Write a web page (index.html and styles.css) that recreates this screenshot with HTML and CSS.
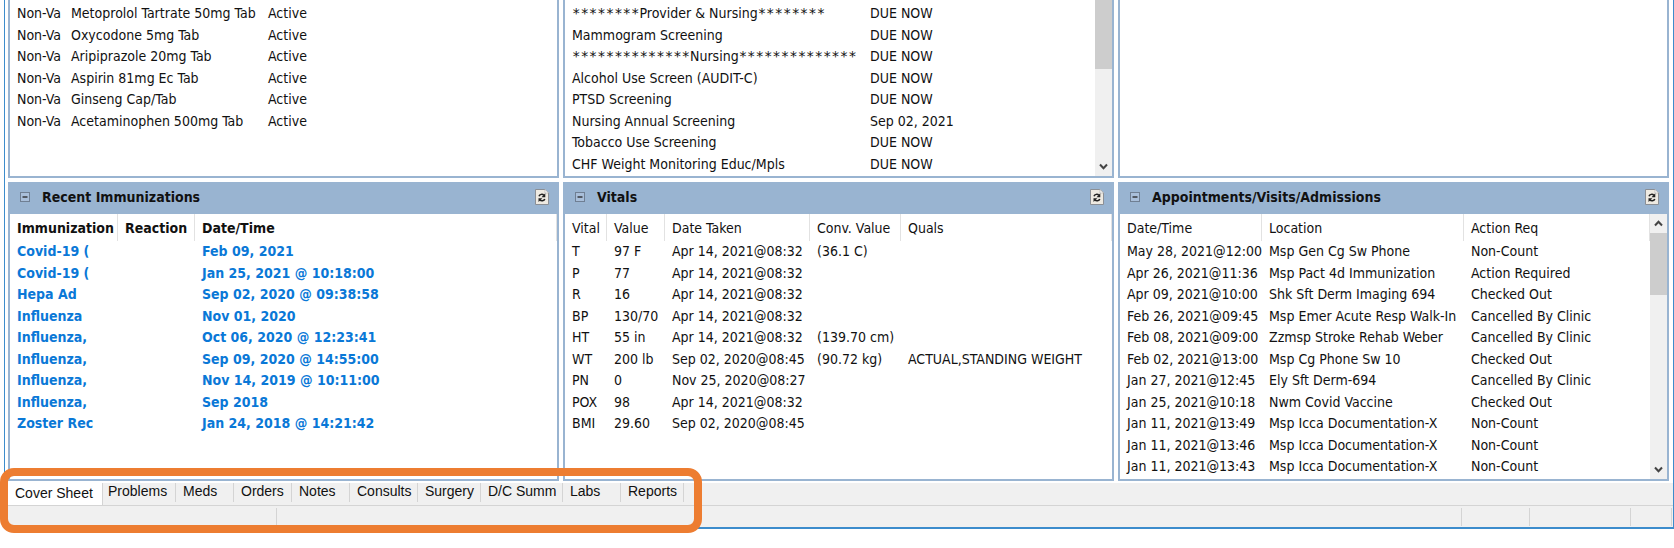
FILE: index.html
```html
<!DOCTYPE html>
<html lang="en">
<head>
<meta charset="utf-8">
<title>Cover Sheet</title>
<link rel="stylesheet" href="styles.css">
</head>
<body>
<svg class="defs" aria-hidden="true">
  <symbol id="i-collapse" viewBox="0 0 10 10">
    <rect x=".5" y=".5" width="9" height="9" fill="#a9bfda" stroke="#6f7f93"/>
    <path d="M2.500 5h5" stroke="#222" stroke-width="1.300"/>
  </symbol>
  <symbol id="i-refresh" viewBox="0 0 14 16">
    <path d="M.5.5h9.500l3.500 3.500v11.500H.5z" fill="#eeeae2" stroke="#8b8f95"/>
    <path d="M10 .5v3.500h3.500z" fill="#fff" stroke="#b5b5b5" stroke-width=".7"/>
    <path d="M4 7.200c.6-2 3.600-2.600 4.900-.8M9.800 10c-.6 2-3.600 2.400-5 .8" fill="none" stroke="#222" stroke-width="1.500"/>
    <path d="M10.300 4.300v4H6.500zM3.500 13V9.200h3.800z" fill="#222"/>
  </symbol>
  <symbol id="i-up" viewBox="0 0 17 17"><path d="M5 10.500l3.500-3.700 3.500 3.700" fill="none" stroke="#444" stroke-width="2"/></symbol>
  <symbol id="i-down" viewBox="0 0 17 17"><path d="M5 6.500l3.500 3.700L12 6.500" fill="none" stroke="#444" stroke-width="2"/></symbol>
</svg>
<div class="window">
  <main class="panels">
    <section class="panel" aria-label="Medications">
      <div class="panel-body list">
        <table class="grid">
          <colgroup><col class="w-med-type"><col class="w-med-name"><col></colgroup>
          <tbody>
            <tr><td>Non-Va</td><td>Metoprolol Tartrate 50mg Tab</td><td>Active</td></tr>
            <tr><td>Non-Va</td><td>Oxycodone 5mg Tab</td><td>Active</td></tr>
            <tr><td>Non-Va</td><td>Aripiprazole 20mg Tab</td><td>Active</td></tr>
            <tr><td>Non-Va</td><td>Aspirin 81mg Ec Tab</td><td>Active</td></tr>
            <tr><td>Non-Va</td><td>Ginseng Cap/Tab</td><td>Active</td></tr>
            <tr><td>Non-Va</td><td>Acetaminophen 500mg Tab</td><td>Active</td></tr>
          </tbody>
        </table>
      </div>
    </section>

    <section class="panel" aria-label="Clinical reminders">
      <div class="panel-body list">
        <table class="grid">
          <colgroup><col class="w-reminder"><col></colgroup>
          <tbody>
            <tr><td><span class="stars">********</span>Provider &amp; Nursing<span class="stars">********</span></td><td>DUE NOW</td></tr>
            <tr><td>Mammogram Screening</td><td>DUE NOW</td></tr>
            <tr><td><span class="stars">**************</span>Nursing<span class="stars">**************</span></td><td>DUE NOW</td></tr>
            <tr><td>Alcohol Use Screen (AUDIT-C)</td><td>DUE NOW</td></tr>
            <tr><td>PTSD Screening</td><td>DUE NOW</td></tr>
            <tr><td>Nursing Annual Screening</td><td>Sep 02, 2021</td></tr>
            <tr><td>Tobacco Use Screening</td><td>DUE NOW</td></tr>
            <tr><td>CHF Weight Monitoring Educ/Mpls</td><td>DUE NOW</td></tr>
          </tbody>
        </table>
        <div class="scroll">
          <div class="thumb thumb-top"></div>
          <button class="arrow arrow-end" aria-label="Scroll down"><svg><use href="#i-down"/></svg></button>
        </div>
      </div>
    </section>

    <section class="panel" aria-label="Lab results"></section>

    <section class="panel">
      <header class="panel-title">
        <button class="collapse" aria-label="Collapse"><svg><use href="#i-collapse"/></svg></button>
        <h2>Recent Immunizations</h2>
        <button class="refresh" aria-label="Refresh"><svg><use href="#i-refresh"/></svg></button>
      </header>
      <div class="panel-body">
        <table class="grid immunizations">
          <colgroup><col class="w-imm"><col class="w-reaction"><col></colgroup>
          <thead><tr><th>Immunization</th><th>Reaction</th><th>Date/Time</th></tr></thead>
          <tbody>
            <tr><td>Covid-19 (</td><td></td><td>Feb 09, 2021</td></tr>
            <tr><td>Covid-19 (</td><td></td><td>Jan 25, 2021 @ 10:18:00</td></tr>
            <tr><td>Hepa Ad</td><td></td><td>Sep 02, 2020 @ 09:38:58</td></tr>
            <tr><td>Influenza</td><td></td><td>Nov 01, 2020</td></tr>
            <tr><td>Influenza,</td><td></td><td>Oct 06, 2020 @ 12:23:41</td></tr>
            <tr><td>Influenza,</td><td></td><td>Sep 09, 2020 @ 14:55:00</td></tr>
            <tr><td>Influenza,</td><td></td><td>Nov 14, 2019 @ 10:11:00</td></tr>
            <tr><td>Influenza,</td><td></td><td>Sep 2018</td></tr>
            <tr><td>Zoster Rec</td><td></td><td>Jan 24, 2018 @ 14:21:42</td></tr>
          </tbody>
        </table>
      </div>
    </section>

    <section class="panel">
      <header class="panel-title">
        <button class="collapse" aria-label="Collapse"><svg><use href="#i-collapse"/></svg></button>
        <h2>Vitals</h2>
        <button class="refresh" aria-label="Refresh"><svg><use href="#i-refresh"/></svg></button>
      </header>
      <div class="panel-body">
        <table class="grid">
          <colgroup><col class="w-vital"><col class="w-value"><col class="w-taken"><col class="w-conv"><col></colgroup>
          <thead><tr><th>Vital</th><th>Value</th><th>Date Taken</th><th>Conv. Value</th><th>Quals</th></tr></thead>
          <tbody>
            <tr><td>T</td><td>97 F</td><td>Apr 14, 2021@08:32</td><td>(36.1 C)</td><td></td></tr>
            <tr><td>P</td><td>77</td><td>Apr 14, 2021@08:32</td><td></td><td></td></tr>
            <tr><td>R</td><td>16</td><td>Apr 14, 2021@08:32</td><td></td><td></td></tr>
            <tr><td>BP</td><td>130/70</td><td>Apr 14, 2021@08:32</td><td></td><td></td></tr>
            <tr><td>HT</td><td>55 in</td><td>Apr 14, 2021@08:32</td><td>(139.70 cm)</td><td></td></tr>
            <tr><td>WT</td><td>200 lb</td><td>Sep 02, 2020@08:45</td><td>(90.72 kg)</td><td>ACTUAL,STANDING WEIGHT</td></tr>
            <tr><td>PN</td><td>0</td><td>Nov 25, 2020@08:27</td><td></td><td></td></tr>
            <tr><td>POX</td><td>98</td><td>Apr 14, 2021@08:32</td><td></td><td></td></tr>
            <tr><td>BMI</td><td>29.60</td><td>Sep 02, 2020@08:45</td><td></td><td></td></tr>
          </tbody>
        </table>
      </div>
    </section>

    <section class="panel">
      <header class="panel-title">
        <button class="collapse" aria-label="Collapse"><svg><use href="#i-collapse"/></svg></button>
        <h2>Appointments/Visits/Admissions</h2>
        <button class="refresh" aria-label="Refresh"><svg><use href="#i-refresh"/></svg></button>
      </header>
      <div class="panel-body">
        <table class="grid">
          <colgroup><col class="w-when"><col class="w-location"><col></colgroup>
          <thead><tr><th>Date/Time</th><th>Location</th><th>Action Req</th></tr></thead>
          <tbody>
            <tr><td>May 28, 2021@12:00</td><td>Msp Gen Cg Sw Phone</td><td>Non-Count</td></tr>
            <tr><td>Apr 26, 2021@11:36</td><td>Msp Pact 4d Immunization</td><td>Action Required</td></tr>
            <tr><td>Apr 09, 2021@10:00</td><td>Shk Sft Derm Imaging 694</td><td>Checked Out</td></tr>
            <tr><td>Feb 26, 2021@09:45</td><td>Msp Emer Acute Resp Walk-In</td><td>Cancelled By Clinic</td></tr>
            <tr><td>Feb 08, 2021@09:00</td><td>Zzmsp Stroke Rehab Weber</td><td>Cancelled By Clinic</td></tr>
            <tr><td>Feb 02, 2021@13:00</td><td>Msp Cg Phone Sw 10</td><td>Checked Out</td></tr>
            <tr><td>Jan 27, 2021@12:45</td><td>Ely Sft Derm-694</td><td>Cancelled By Clinic</td></tr>
            <tr><td>Jan 25, 2021@10:18</td><td>Nwm Covid Vaccine</td><td>Checked Out</td></tr>
            <tr><td>Jan 11, 2021@13:49</td><td>Msp Icca Documentation-X</td><td>Non-Count</td></tr>
            <tr><td>Jan 11, 2021@13:46</td><td>Msp Icca Documentation-X</td><td>Non-Count</td></tr>
            <tr><td>Jan 11, 2021@13:43</td><td>Msp Icca Documentation-X</td><td>Non-Count</td></tr>
          </tbody>
        </table>
        <div class="scroll">
          <button class="arrow" aria-label="Scroll up"><svg><use href="#i-up"/></svg></button>
          <div class="thumb"></div>
          <button class="arrow arrow-end" aria-label="Scroll down"><svg><use href="#i-down"/></svg></button>
        </div>
      </div>
    </section>
  </main>

  <footer class="footer">
    <div class="tabs" role="tablist">
      <button role="tab" aria-selected="true" class="tab tab-cover">Cover Sheet</button>
      <button role="tab" class="tab tab-problems">Problems</button>
      <button role="tab" class="tab">Meds</button>
      <button role="tab" class="tab">Orders</button>
      <button role="tab" class="tab">Notes</button>
      <button role="tab" class="tab tab-consults">Consults</button>
      <button role="tab" class="tab tab-surgery">Surgery</button>
      <button role="tab" class="tab tab-summary">D/C Summ</button>
      <button role="tab" class="tab">Labs</button>
      <button role="tab" class="tab tab-reports">Reports</button>
    </div>
    <div class="status">
      <span class="cell cell-first"></span>
      <span class="cell cell-fill"></span>
      <span class="cell cell-a"></span>
      <span class="cell cell-b"></span>
      <span class="cell cell-c"></span>
    </div>
    <div class="callout"></div>
  </footer>
</div>
</body>
</html>
```
FILE: styles.css
```css
* { box-sizing: border-box; }

body {
  margin: 0;
  min-height: 100vh;
  padding-bottom: 16px;
  background: #fff;
  color: #111;
  font: 14px/21px "DejaVu Sans Condensed", "DejaVu Sans", sans-serif;
}

button {
  margin: 0;
  padding: 0;
  border: 0;
  background: none;
  color: inherit;
  font: inherit;
}

svg { display: block; width: 100%; height: 100%; }
.defs { position: absolute; width: 0; height: 0; }

.window {
  margin-left: 4px;
  border: solid #3c8ccc;
  border-width: 0 1px 2px;
}

.panels {
  display: grid;
  grid-template-columns: repeat(3, minmax(0, 1fr));
  gap: 4px;
  padding: 0 4px 0 3px;
}

.panel {
  display: flex;
  flex-direction: column;
  border: solid #99b4d1;
  border-width: 0 2px 2px;
}

.panel-title {
  display: flex;
  align-items: center;
  height: 32px;
  padding: 0 8px 2px 10px;
  background: #99b4d1;
}

.panel-title h2 {
  flex: 1;
  margin: 0 0 0 12px;
  font-size: 14px;
}

.collapse { width: 10px; height: 10px; }
.refresh { width: 14px; height: 16px; }

.panel-body {
  display: flex;
  flex: 1;
  align-items: flex-start;
}

.grid {
  flex: 1;
  width: 100%;
  min-width: 0;
  margin-bottom: 2px;
  border-collapse: separate;
  border-spacing: 0;
  table-layout: fixed;
  white-space: nowrap;
}

.list .grid { margin: 3px 0 1px; }

.grid th,
.grid td {
  height: 21px;
  padding: 0 0 0 7px;
  line-height: 21px;
  text-align: left;
}

.grid tr:nth-child(even) td { height: 22px; }

.grid th {
  height: 27px;
  padding-top: 2px;
  border-right: 1px solid #e2e2e2;
  font-weight: normal;
}

/* The monospaced asterisk is wider, which spreads the divider rows out. */
.stars { font-family: "DejaVu Sans Mono", monospace; line-height: 1; }

.grid.immunizations th,
.immunizations td { font-weight: bold; }
.immunizations td { color: #0a78d7; }

.w-med-type { width: 54px; }
.w-med-name { width: 197px; }
.w-reminder { width: 298px; }
.w-imm { width: 108px; }
.w-reaction { width: 77px; }
.w-vital { width: 42px; }
.w-value { width: 58px; }
.w-taken { width: 145px; }
.w-conv { width: 91px; }
.w-when { width: 142px; }
.w-location { width: 202px; }

.scroll {
  display: flex;
  flex: none;
  flex-direction: column;
  align-self: stretch;
  width: 17px;
  background: #f0f0f0;
}

.thumb { height: 62px; background: #cdcdcd; }
.thumb-top { height: 69px; }
.arrow { width: 17px; height: 19px; }
.arrow-end { margin-top: auto; }

.footer {
  position: relative;
  padding-top: 2px;
  background: linear-gradient(#fff 2px, #f0f0f0 2px);
}

.tabs {
  display: flex;
  height: 23px;
  padding-left: 3px;
  border-bottom: 1px solid #d4d4d4;
  font: 14px/16px "Liberation Sans", Arial, sans-serif;
}

.tab {
  width: 58px;
  height: 19px;
  padding: 0 0 3px 7px;
  border-right: 1px solid #d4d4d4;
  text-align: left;
  white-space: nowrap;
}

.tab[aria-selected] {
  height: 22px;
  padding-bottom: 2px;
  background: #fff;
}

.tab-cover { width: 95px; }
.tab-problems { width: 73px; padding-left: 5px; }
.tab-consults { width: 68px; }
.tab-surgery { width: 63px; }
.tab-summary { width: 82px; }
.tab-reports { width: 63px; }

.status { display: flex; height: 21px; padding: 2px 1px 1px 0; }
.cell { border-right: 1px solid #d4d4d4; }
.cell-first { width: 272px; }
.cell-fill { flex: 1; }
.cell-a { width: 68px; }
.cell-b { width: 101px; }
.cell-c { width: 41px; }

.callout {
  position: absolute;
  top: -13px;
  bottom: -6px;
  left: -5px;
  width: 702px;
  border: 8px solid #ed7d31;
  border-radius: 14px;
  pointer-events: none;
}
```
